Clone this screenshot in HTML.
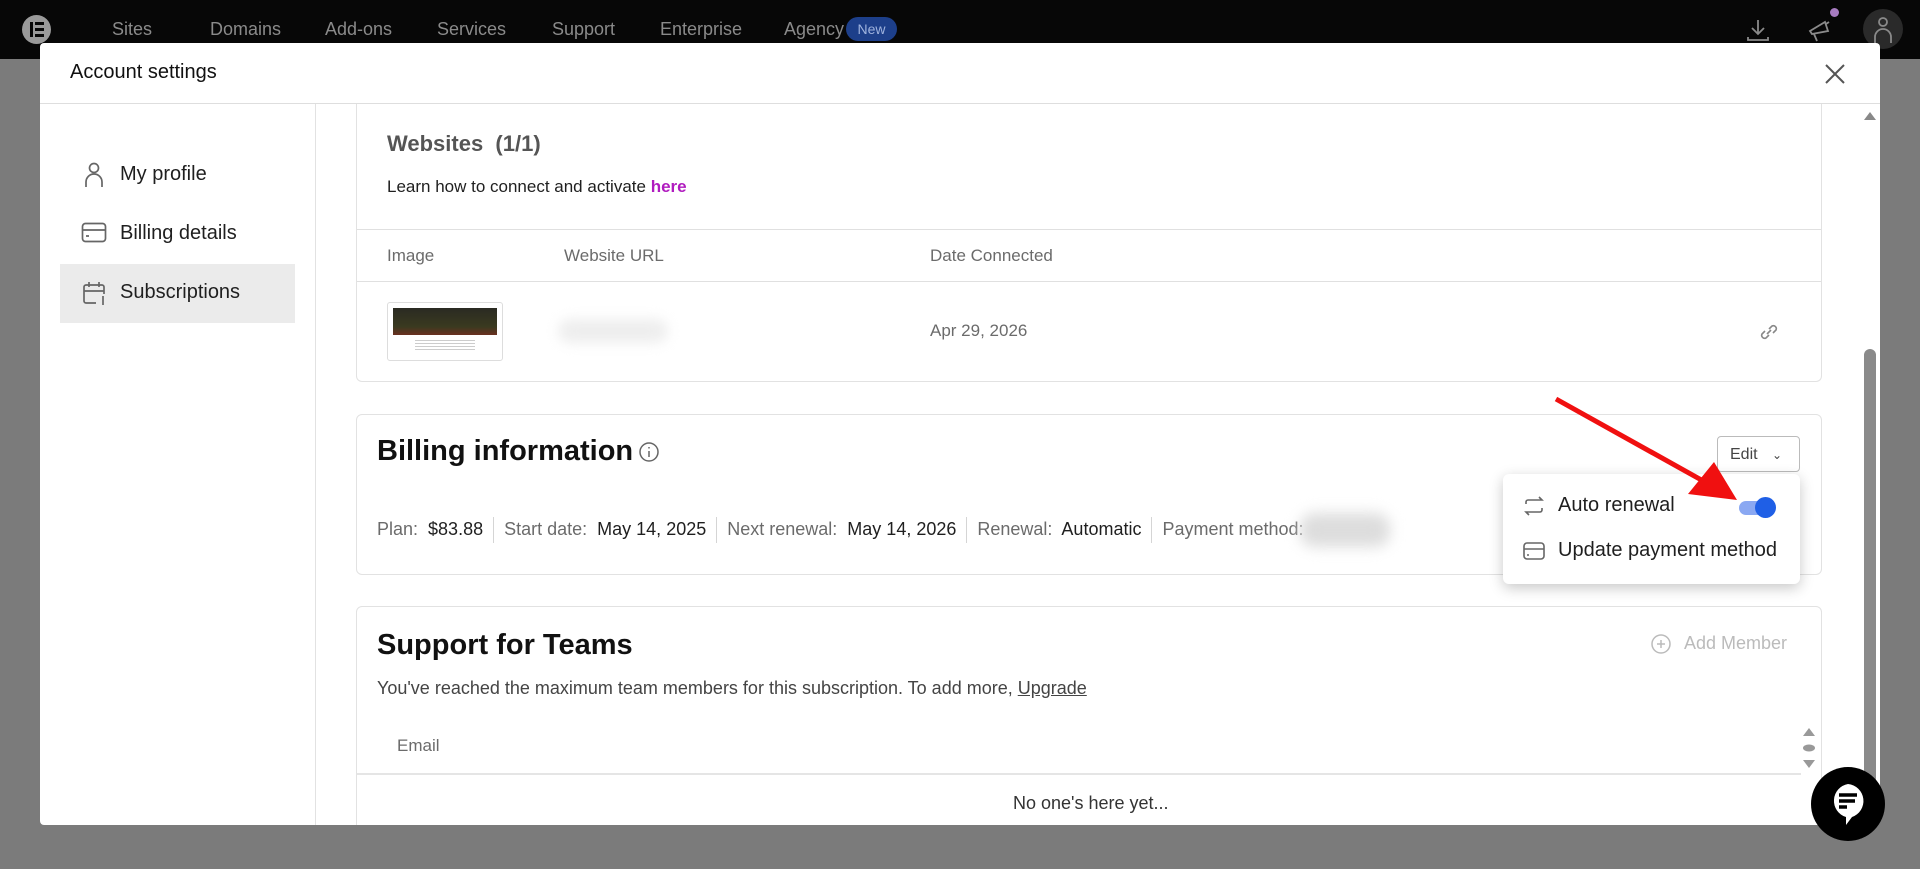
<!DOCTYPE html>
<html><head><meta charset="utf-8"><style>
*{box-sizing:border-box;margin:0;padding:0}
body{width:1920px;height:869px;overflow:hidden;background:#7b7b7b;font-family:"Liberation Sans",sans-serif;position:relative;color:#1f1f1f}
.a{position:absolute}
.top{left:0;top:0;width:1920px;height:59px;background:#070707}
.nav{top:19px;font-size:18px;color:#8a8a8a}
.modal{left:40px;top:43px;width:1840px;height:782px;background:#fff;border-radius:4px;overflow:hidden}
.card{background:#fff;border:1px solid #e2e2e2;border-radius:6px}
.g{color:#6b6b6b}
.sep{display:inline-block;width:1px;height:26px;background:#d5d5d5;vertical-align:middle;margin:0 10px}
</style></head><body>
<div class="a top"></div>
<div class="a" style="left:22px;top:15px;width:29px;height:29px;border-radius:50%;background:#9a9a9a"></div>
<div class="a" style="left:30px;top:22px;width:3px;height:15px;background:#070707"></div>
<div class="a" style="left:35px;top:22px;width:9px;height:3px;background:#070707"></div>
<div class="a" style="left:35px;top:28px;width:9px;height:3px;background:#070707"></div>
<div class="a" style="left:35px;top:34px;width:9px;height:3px;background:#070707"></div>
<div class="a nav" style="left:112px">Sites</div>
<div class="a nav" style="left:210px">Domains</div>
<div class="a nav" style="left:325px">Add-ons</div>
<div class="a nav" style="left:437px">Services</div>
<div class="a nav" style="left:552px">Support</div>
<div class="a nav" style="left:660px">Enterprise</div>
<div class="a nav" style="left:784px">Agency</div>
<div class="a" style="left:846px;top:17px;width:51px;height:24px;border-radius:12px;background:#1d3f8a;color:#9fb3de;font-size:14px;text-align:center;line-height:24px">New</div>
<svg class="a" style="left:1745px;top:17px" width="26" height="26" viewBox="0 0 26 26" fill="none" stroke="#8a8a8a" stroke-width="1.8"><path d="M13 3v14M7 11l6 6 6-6M3 20v3h20v-3"/></svg>
<svg class="a" style="left:1805px;top:15px" width="30" height="30" viewBox="0 0 30 30" fill="none" stroke="#8a8a8a" stroke-width="1.8"><path d="M5 16l15-9 3 9-16 3zM9 19l3 7M21 9l3-2"/></svg>
<div class="a" style="left:1830px;top:8px;width:9px;height:9px;border-radius:50%;background:#a77cc0"></div>
<div class="a" style="left:1863px;top:9px;width:40px;height:40px;border-radius:50%;background:#2a2a2a"></div>
<svg class="a" style="left:1871px;top:15px" width="24" height="30" viewBox="0 0 24 30" fill="none" stroke="#8a8a8a" stroke-width="1.8"><circle cx="12" cy="7" r="4"/><path d="M4 28v-6a8 8 0 0 1 16 0v6"/></svg>

<div class="a modal">
 <div class="a" style="left:30px;top:18px;font-size:20px;color:#111">Account settings</div>
 <svg class="a" style="left:1784px;top:20px" width="22" height="22" viewBox="0 0 22 22" stroke="#555" stroke-width="2"><path d="M2 2l18 18M20 2L2 20"/></svg>
 <div class="a" style="left:0;top:60px;width:1840px;height:1px;background:#dedede"></div>
 <div class="a" style="left:275px;top:61px;width:1px;height:730px;background:#e2e2e2"></div>
 <!-- sidebar -->
 <svg class="a" style="left:42px;top:119px" width="24" height="26" viewBox="0 0 24 26" fill="none" stroke="#666" stroke-width="1.7"><circle cx="12" cy="6" r="4.5"/><path d="M4 25v-5a8 8 0 0 1 16 0v5"/></svg>
 <div class="a" style="left:80px;top:120px;font-size:20px">My profile</div>
 <svg class="a" style="left:41px;top:179px" width="26" height="22" viewBox="0 0 26 22" fill="none" stroke="#666" stroke-width="1.7"><rect x="1.5" y="1.5" width="23" height="18" rx="3"/><path d="M1.5 8h23M5 14h3"/></svg>
 <div class="a" style="left:80px;top:179px;font-size:20px">Billing details</div>
 <div class="a" style="left:20px;top:221px;width:235px;height:59px;background:#ebebeb"></div>
 <svg class="a" style="left:42px;top:238px" width="26" height="26" viewBox="0 0 26 26" fill="none" stroke="#666" stroke-width="1.7"><path d="M14 22H4a2 2 0 0 1-2-2V6a2 2 0 0 1 2-2h16a2 2 0 0 1 2 2v7M2 10h20M7 1v5M17 1v5M21 15v9"/></svg>
 <div class="a" style="left:80px;top:238px;font-size:20px">Subscriptions</div>
 <!-- websites card -->
 <div class="a card" style="left:316px;top:61px;width:1466px;height:278px;border-top:none;border-radius:0 0 6px 6px"></div>
 <div class="a" style="left:347px;top:88px;font-size:22px;color:#555;font-weight:bold">Websites&nbsp; (1/1)</div>
 <div class="a" style="left:347px;top:134px;font-size:17px">Learn how to connect and activate <span style="color:#b01bbf;font-weight:bold">here</span></div>
 <div class="a" style="left:317px;top:186px;width:1464px;height:1px;background:#e0e0e0"></div>
 <div class="a g" style="left:347px;top:203px;font-size:17px">Image</div>
 <div class="a g" style="left:524px;top:203px;font-size:17px">Website URL</div>
 <div class="a g" style="left:890px;top:203px;font-size:17px">Date Connected</div>
 <div class="a" style="left:317px;top:238px;width:1464px;height:1px;background:#e0e0e0"></div>
 <div class="a" style="left:347px;top:259px;width:116px;height:59px;border:1px solid #ddd;border-radius:3px;background:#fff"></div>
 <div class="a" style="left:353px;top:265px;width:104px;height:27px;background:linear-gradient(#2a2a22,#3a3a20 70%,#6a3020)"></div>
 <div class="a" style="left:375px;top:297px;width:60px;height:12px;background:repeating-linear-gradient(#ccc 0 1px,#fff 1px 3px)"></div>
 <div class="a" style="left:518px;top:276px;width:110px;height:24px;border-radius:12px;background:#eee;filter:blur(6px)"></div>
 <div class="a g" style="left:890px;top:278px;font-size:17px">Apr 29, 2026</div>
 <svg class="a" style="left:1718px;top:278px" width="22" height="22" viewBox="0 0 22 22" fill="none" stroke="#888" stroke-width="1.6"><path d="M9 13l4-4M7 10l-3 3a3 3 0 0 0 4 4l3-3M15 12l3-3a3 3 0 0 0-4-4l-3 3"/></svg>
 <!-- billing card -->
 <div class="a card" style="left:316px;top:371px;width:1466px;height:161px"></div>
 <div class="a" style="left:337px;top:392px;font-size:29px;font-weight:bold;color:#111">Billing information</div>
 <svg class="a" style="left:598px;top:398px" width="22" height="22" viewBox="0 0 22 22" fill="none" stroke="#666" stroke-width="1.5"><circle cx="11" cy="11" r="9"/><path d="M11 10v6M11 6v1.5"/></svg>
 <div class="a" style="left:337px;top:474px;font-size:18px;white-space:nowrap"><span class="g">Plan:</span>&nbsp; $83.88<span class="sep"></span><span class="g">Start date:</span>&nbsp; May 14, 2025<span class="sep"></span><span class="g">Next renewal:</span>&nbsp; May 14, 2026<span class="sep"></span><span class="g">Renewal:</span>&nbsp; Automatic<span class="sep"></span><span class="g">Payment method:</span></div>
 <div class="a" style="left:1260px;top:470px;width:90px;height:34px;border-radius:14px;background:#ddd;filter:blur(7px)"></div>
 <div class="a" style="left:1677px;top:393px;width:83px;height:36px;border:1px solid #bbb;border-radius:4px;font-size:16px;color:#444;padding:9px 0 0 12px">Edit <span style="font-size:12px;margin-left:10px">&#8964;</span></div>
 <!-- teams -->
 <div class="a card" style="left:316px;top:563px;width:1466px;height:260px"></div>
 <div class="a" style="left:337px;top:586px;font-size:29px;font-weight:bold;color:#111">Support for Teams</div>
 <svg class="a" style="left:1610px;top:590px" width="22" height="22" viewBox="0 0 22 22" fill="none" stroke="#bbb" stroke-width="1.5"><circle cx="11" cy="11" r="9"/><path d="M11 7v8M7 11h8"/></svg>
 <div class="a" style="left:1644px;top:590px;font-size:18px;color:#bbb">Add Member</div>
 <div class="a" style="left:337px;top:635px;font-size:18px;color:#444">You've reached the maximum team members for this subscription. To add more, <u>Upgrade</u></div>
 <div class="a g" style="left:357px;top:693px;font-size:17px">Email</div>
 <div class="a" style="left:317px;top:730px;width:1444px;height:2px;background:#e5e5e5"></div>
 <div class="a" style="left:973px;top:750px;font-size:18px;color:#333">No one's here yet...</div>
 <svg class="a" style="left:1762px;top:682px" width="14" height="48" viewBox="0 0 14 48" fill="#999"><path d="M1 11L7 3l6 8z"/><ellipse cx="7" cy="23" rx="6" ry="3.5"/><path d="M1 35l6 8 6-8z"/></svg>
 <!-- scrollbar -->
 <svg class="a" style="left:1823px;top:66px" width="14" height="12" viewBox="0 0 14 12" fill="#888"><path d="M1 11L7 3l6 8z"/></svg>
 <div class="a" style="left:1824px;top:306px;width:12px;height:446px;border-radius:6px;background:#8a8a8a"></div>
 <!-- dropdown -->
 <div class="a" style="left:1463px;top:431px;width:297px;height:110px;background:#fff;border-radius:6px;box-shadow:0 4px 14px rgba(0,0,0,.22)"></div>
 <svg class="a" style="left:1483px;top:452px" width="22" height="22" viewBox="0 0 22 22" fill="none" stroke="#666" stroke-width="1.6"><path d="M3 9V7a2 2 0 0 1 2-2h14l-3-3M19 13v2a2 2 0 0 1-2 2H3l3 3"/></svg>
 <div class="a" style="left:1518px;top:451px;font-size:20px">Auto renewal</div>
 <div class="a" style="left:1699px;top:458px;width:34px;height:14px;border-radius:7px;background:#8aa8f2"></div>
 <div class="a" style="left:1715px;top:454px;width:21px;height:21px;border-radius:50%;background:#1f5fe6"></div>
 <svg class="a" style="left:1483px;top:498px" width="22" height="20" viewBox="0 0 22 20" fill="none" stroke="#666" stroke-width="1.6"><rect x="1" y="2" width="20" height="16" rx="3"/><path d="M1 8h20M4 14h2"/></svg>
 <div class="a" style="left:1518px;top:496px;font-size:20px">Update payment method</div>
</div>
<!-- arrow -->
<svg class="a" style="left:0;top:0" width="1920" height="869"><path d="M1556 399L1705 482" stroke="#f01010" stroke-width="5"/><path d="M1737 500L1688 494 1714 462z" fill="#f01010"/></svg>
<!-- chat -->
<div class="a" style="left:1811px;top:767px;width:74px;height:74px;border-radius:50%;background:#000"></div>
<svg class="a" style="left:1826px;top:780px" width="44" height="48" viewBox="0 0 44 48"><path d="M22 4a17 17 0 0 1 4 33l-6 8v-8A17 17 0 0 1 22 4z" fill="#fff"/><path d="M13 15h18M13 21h16M13 27h8" stroke="#000" stroke-width="3.5"/></svg>
</body></html>
